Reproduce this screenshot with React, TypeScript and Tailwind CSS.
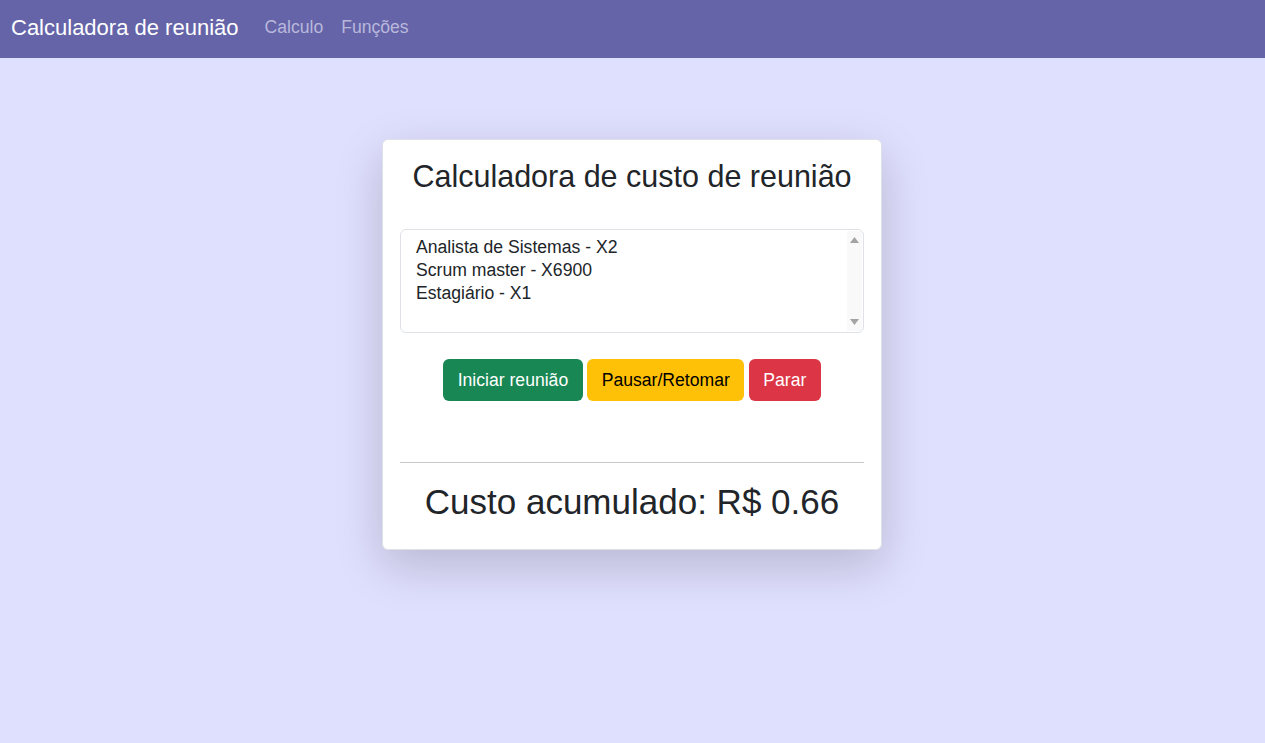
export default function App() {
  const roles = 'Analista de Sistemas - X2\nScrum master - X6900\nEstagiário - X1';

  return (
    <div className="min-h-screen bg-[#dfdffe] font-['Liberation_Sans',Arial,sans-serif] text-[#212529]">
      {/* Navbar */}
      <nav className="h-[58px] bg-[#6564a8] flex items-center px-[11px] pb-[4px]">
        <span className="text-white text-[22px] mr-[26px]">Calculadora de reunião</span>
        <a className="text-[#b9b8dc] text-[17.6px] mr-[18px]">Calculo</a>
        <a className="text-[#b9b8dc] text-[17.6px]">Funções</a>
      </nav>

      {/* Card */}
      <div className="flex justify-center pt-[81px] pr-[1px]">
        <div className="w-[500px] bg-white rounded-[6px] border border-[#dee2e6] shadow-[0_16px_48px_rgba(0,0,0,0.175)] px-[17px] pt-[17px] pb-[26px]">
          <h3 className="text-center text-[30.5px] leading-[38px] mb-[34px]">Calculadora de custo de reunião</h3>
          <div className="flex h-[104px] rounded-[6px] border border-[#dee2e6] overflow-hidden">
            <textarea
              readOnly
              value={roles}
              className="flex-1 resize-none overflow-hidden pl-[15px] pr-[4px] pt-[6px] pb-[4px] text-[17.6px] leading-[23px] outline-none"
            />
            <div className="w-[15px] mr-[1px] my-[1px] bg-[#f9f9f9] flex flex-col items-center justify-between py-[6px]">
              <svg width="9" height="6" viewBox="0 0 9 6"><path d="M4.5 0L9 6H0z" fill="#a3a3a3" /></svg>
              <svg width="9" height="6" viewBox="0 0 9 6"><path d="M0 0h9L4.5 6z" fill="#a3a3a3" /></svg>
            </div>
          </div>
          <div className="flex justify-center gap-[4.5px] mt-[26px]">
            <button className="bg-[#198754] text-white text-[17.6px] rounded-[6px] px-[14.5px] h-[42px]">Iniciar reunião</button>
            <button className="bg-[#ffc107] text-black text-[17.6px] rounded-[6px] px-[14.5px] h-[42px]">Pausar/Retomar</button>
            <button className="bg-[#dc3545] text-white text-[17.6px] rounded-[6px] px-[14.5px] h-[42px]">Parar</button>
          </div>
          <hr className="mt-[61px] border-t border-[#c8c8c8]" />
          <div className="text-center text-[35px] leading-[43px] mt-[17px]">Custo acumulado: R$ 0.66</div>
        </div>
      </div>
    </div>
  );
}
